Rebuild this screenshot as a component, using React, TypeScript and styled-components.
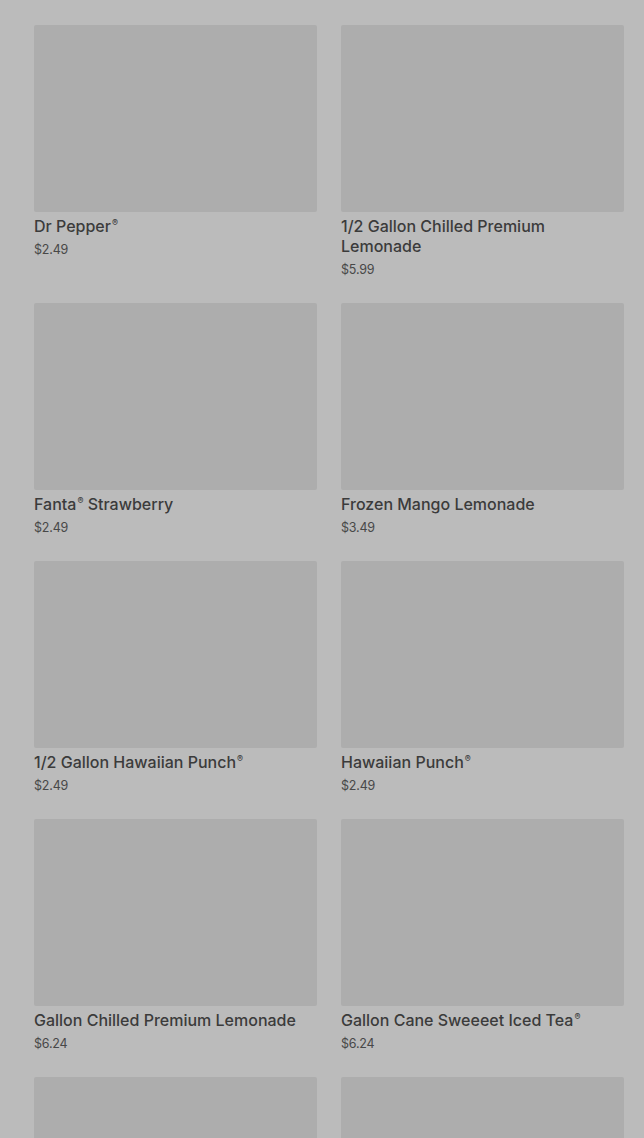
import { FC } from 'react'
import styled, { createGlobalStyle } from 'styled-components'

type Product = { name: string; price: string }

const products: Product[] = [
	{ name: 'Coca-Cola®', price: '$2.49' },
	{ name: 'Diet Coke®', price: '$2.49' },
	{ name: 'Dr Pepper®', price: '$2.49' },
	{ name: '1/2 Gallon Chilled Premium Lemonade', price: '$5.99' },
	{ name: 'Fanta® Strawberry', price: '$2.49' },
	{ name: 'Frozen Mango Lemonade', price: '$3.49' },
	{ name: '1/2 Gallon Hawaiian Punch®', price: '$2.49' },
	{ name: 'Hawaiian Punch®', price: '$2.49' },
	{ name: 'Gallon Chilled Premium Lemonade', price: '$6.24' },
	{ name: 'Gallon Cane Sweeeet Iced Tea®', price: '$6.24' },
	{ name: 'Gallon Hawaiian Punch®', price: '$6.24' },
	{ name: 'Gallon Unsweetened Iced Tea', price: '$6.24' },
]

const GlobalStyle = createGlobalStyle`
	html, body {
		margin: 0;
		padding: 0;
		background: #bbbbbb;
		overflow: hidden;
	}
	body {
		font-family: Inter, Roboto, 'Liberation Sans', sans-serif;
	}
`

const Page = styled.main`
	height: 1138px;
	overflow: hidden;
	padding: 0 20px 0 34px;
`

const Grid = styled.section`
	display: grid;
	grid-template-columns: 1fr 1fr;
	column-gap: 24px;
	row-gap: 23px;
	margin-top: -233px;
`

const Card = styled.article`
	display: flex;
	flex-direction: column;
`

const Thumb = styled.div`
	height: 187px;
	background: #adadad;
	border-radius: 2px;
	margin-bottom: 4px;
`

const Name = styled.h3`
	margin: 0;
	font-size: 16px;
	line-height: 20px;
	font-weight: 500;
	color: #3b3b3b;
`

const Reg = styled.sup`
	font-size: 9px;
	line-height: 0;
	vertical-align: 6px;
	margin-left: 1px;
`

const Price = styled.span`
	margin-top: 4px;
	font-size: 12.5px;
	line-height: 20px;
	color: #484848;
	letter-spacing: -0.2px;
`

const renderName = (name: string) =>
	name.split('®').flatMap((part, i, arr) =>
		i < arr.length - 1 ? [part, <Reg key={i}>®</Reg>] : [part]
	)

const App: FC = () => {
	return (
		<>
			<GlobalStyle />
			<Page>
				<Grid>
					{products.map((p) => (
						<Card key={p.name}>
							<Thumb />
							<Name>{renderName(p.name)}</Name>
							<Price>{p.price}</Price>
						</Card>
					))}
				</Grid>
			</Page>
		</>
	)
}

export default App
